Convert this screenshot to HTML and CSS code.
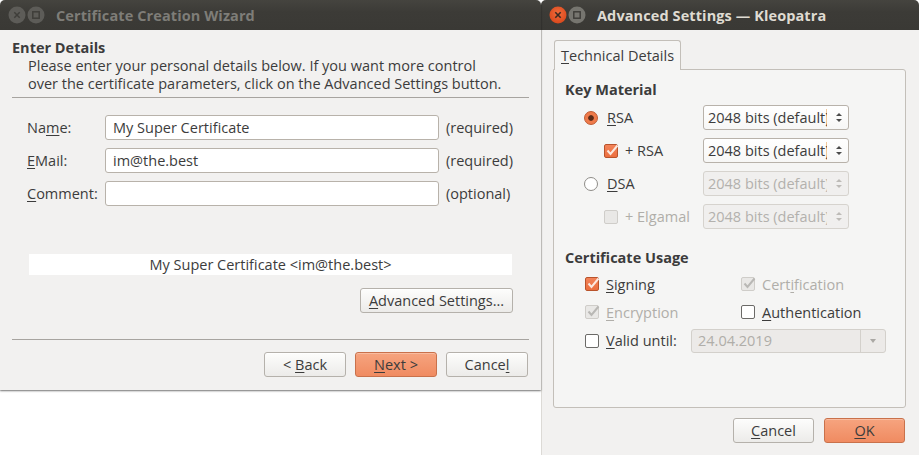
FILE: index.html
```html
<!DOCTYPE html>
<html>
<head>
<meta charset="utf-8">
<link rel="stylesheet" href="styles.css">
</head>
<body>
<div class="desk">
  <div class="win wiz">
    <div class="titlebar inactive">
      <span class="wbtn"><svg width="18" height="18" viewBox="0 0 18 18"><circle cx="9" cy="9" r="8.5" class="wb-fill"/><path d="M6.3 6.3 L11.7 11.7 M11.7 6.3 L6.3 11.7" class="wb-glyph"/></svg></span>
      <span class="wbtn"><svg width="18" height="18" viewBox="0 0 18 18"><circle cx="9" cy="9" r="8.5" class="wb-fill"/><rect x="5.8" y="5.8" width="6.4" height="6.4" class="wb-glyph"/></svg></span>
      <span class="title">Certificate Creation Wizard</span>
    </div>
    <div class="wiz-body">
      <div class="hdr">
        <div class="hdr-title">Enter Details</div>
        <div class="hdr-desc">Please enter your personal details below. If you want more control<br>over the certificate parameters, click on the Advanced Settings button.</div>
      </div>
      <div class="sep"></div>
      <div class="form">
        <div class="frow"><span class="flabel">Na<u>m</u>e:</span><span class="input">My Super Certificate</span><span class="hint">(required)</span></div>
        <div class="frow"><span class="flabel"><u>E</u>Mail:</span><span class="input">im@the.best</span><span class="hint">(required)</span></div>
        <div class="frow"><span class="flabel"><u>C</u>omment:</span><span class="input"></span><span class="hint">(optional)</span></div>
      </div>
      <div class="preview">My Super Certificate &lt;im@the.best&gt;</div>
      <div class="adv-row"><span class="btn adv-btn"><span><u>A</u>dvanced Settings...</span></span></div>
      <div class="sep sep2"></div>
      <div class="btnrow">
        <span class="btn wbtn-w"><span>&lt; <u>B</u>ack</span></span>
        <span class="btn primary wbtn-w"><span><u>N</u>ext &gt;</span></span>
        <span class="btn wbtn-w"><span>Cance<u>l</u></span></span>
      </div>
    </div>
  </div>

  <div class="win adv">
    <div class="titlebar active">
      <span class="wbtn"><svg width="18" height="18" viewBox="0 0 18 18"><defs><radialGradient id="cg" cx="50%" cy="40%" r="60%"><stop offset="0" stop-color="#f26d3d"/><stop offset="1" stop-color="#d9481c"/></radialGradient></defs><circle cx="9" cy="9" r="8.5" fill="url(#cg)"/><path d="M6.3 6.3 L11.7 11.7 M11.7 6.3 L6.3 11.7" stroke="#3a2a22" stroke-width="1.6" fill="none"/></svg></span>
      <span class="wbtn"><svg width="18" height="18" viewBox="0 0 18 18"><circle cx="9" cy="9" r="8.5" fill="#76756f"/><rect x="5.8" y="5.8" width="6.4" height="6.4" stroke="#3c3b37" stroke-width="1.4" fill="none"/></svg></span>
      <span class="title">Advanced Settings — Kleopatra</span>
    </div>
    <div class="adv-body">
      <div class="tabbar"><span class="tab"><u>T</u>echnical Details</span></div>
      <div class="pane">
        <div class="group-title">Key Material</div>
        <div class="keygrid">
          <div class="krow">
            <span class="kopt"><span class="radio on"></span><span class="olabel"><u>R</u>SA</span></span>
            <span class="combo"><span class="ctext">2048 bits (default)</span><span class="spin"><i class="up"></i><i class="dn"></i></span></span>
          </div>
          <div class="krow">
            <span class="kopt sub"><span class="check on"><svg width="16" height="16" viewBox="0 0 16 16"><path d="M3.5 7.5 L6.5 11 L13.5 2.5" stroke="#fbe9e0" stroke-width="2" fill="none"/></svg></span><span class="olabel">+ RSA</span></span>
            <span class="combo"><span class="ctext">2048 bits (default)</span><span class="spin"><i class="up"></i><i class="dn"></i></span></span>
          </div>
          <div class="krow">
            <span class="kopt"><span class="radio"></span><span class="olabel"><u>D</u>SA</span></span>
            <span class="combo dis"><span class="ctext">2048 bits (default)</span><span class="spin"><i class="up"></i><i class="dn"></i></span></span>
          </div>
          <div class="krow">
            <span class="kopt sub dis"><span class="check dis"></span><span class="olabel">+ El<u>g</u>amal</span></span>
            <span class="combo dis"><span class="ctext">2048 bits (default)</span><span class="spin"><i class="up"></i><i class="dn"></i></span></span>
          </div>
        </div>
        <div class="group-title g2">Certificate Usage</div>
        <div class="usage">
          <span class="uopt"><span class="check on"><svg width="16" height="16" viewBox="0 0 16 16"><path d="M3.5 7.5 L6.5 11 L13.5 2.5" stroke="#fbe9e0" stroke-width="2" fill="none"/></svg></span><span class="olabel"><u>S</u>igning</span></span>
          <span class="uopt dis"><span class="check dis"><svg width="16" height="16" viewBox="0 0 16 16"><path d="M3.5 7.5 L6.5 11 L13.5 2.5" stroke="#b9b8b5" stroke-width="2" fill="none"/></svg></span><span class="olabel">Cert<u>i</u>fication</span></span>
          <span class="uopt dis"><span class="check dis"><svg width="16" height="16" viewBox="0 0 16 16"><path d="M3.5 7.5 L6.5 11 L13.5 2.5" stroke="#b9b8b5" stroke-width="2" fill="none"/></svg></span><span class="olabel"><u>E</u>ncryption</span></span>
          <span class="uopt"><span class="check"></span><span class="olabel"><u>A</u>uthentication</span></span>
        </div>
        <div class="valid">
          <span class="uopt"><span class="check"></span><span class="olabel"><u>V</u>alid until:</span></span>
          <span class="datebox"><span class="dtext">24.04.2019</span><span class="ddrop"><i class="dn"></i></span></span>
        </div>
      </div>
      <div class="adv-btns">
        <span class="btn abtn"><span><u>C</u>ancel</span></span>
        <span class="btn primary abtn"><span><u>O</u>K</span></span>
      </div>
    </div>
  </div>
</div>
</body>
</html>
```
FILE: styles.css
```css
html, body { margin: 0; padding: 0; background: #ffffff; }
body { width: 919px; height: 455px; overflow: hidden; font-family: "Open Sans", "Noto Sans", sans-serif; font-size: 14.5px; color: #3c3c3c; }
u { text-decoration: underline; text-underline-offset: 2px; text-decoration-thickness: 1px; }

.desk { display: flex; align-items: flex-start; }
.win { background: #f2f1f0; border-radius: 5px 5px 0 0; display: flex; flex-direction: column; }
.wiz { width: 541px; height: 390px; box-shadow: 0 1px 2px rgba(0,0,0,0.55); position: relative; z-index: 1; }
.adv { width: 378px; height: 470px; box-shadow: inset 1px 0 0 #dcdad6; }

.titlebar { height: 30px; flex: none; display: flex; align-items: center; background: linear-gradient(#45443f, #3c3b37 40%, #3a3935); border-radius: 5px 5px 0 0; padding-left: 8px; }
.wbtn { width: 18px; height: 18px; margin-right: 1px; display: flex; }
.inactive .wb-fill { fill: #5d5c58; }
.inactive .wb-glyph { stroke: #3f3e3a; stroke-width: 1.5; fill: none; }
.title { margin-left: 10px; font-weight: bold; font-size: 14.5px; letter-spacing: 0.1px; }
.inactive .title { color: #7e7d78; }
.active .title { color: #dfdbd2; }

/* wizard */
.wiz-body { display: flex; flex-direction: column; }
.hdr { padding: 9px 12px 0 12px; line-height: 18px; }
.hdr-title { font-weight: bold; }
.hdr-desc { padding-left: 16px; }
.sep { height: 1px; background: #a7a4a0; margin: 4px 12px 0 12px; }
.form { display: flex; flex-direction: column; gap: 8px; margin-top: 17px; padding-left: 27px; }
.frow { display: flex; align-items: center; height: 25px; }
.flabel { width: 78px; }
.input { width: 334px; height: 25px; box-sizing: border-box; background: #fff; border: 1px solid #b8b2aa; border-radius: 3px; padding: 0 7px; line-height: 23px; }
.hint { margin-left: 7px; }
.preview { margin: 48px 0 0 29px; width: 483px; height: 21px; background: #fff; text-align: center; line-height: 21px; }
.adv-row { display: flex; justify-content: flex-end; margin-top: 13px; padding-right: 28px; }
.btn { box-sizing: border-box; height: 25px; display: inline-flex; align-items: center; justify-content: center; border: 1px solid #b5b1ab; border-radius: 3px; background: linear-gradient(#fdfdfc, #ecebe9); box-shadow: inset 0 1px 0 #fff; white-space: pre; }
.adv-btn { width: 153px; }
.sep2 { margin-top: 26px; }
.btnrow { display: flex; justify-content: flex-end; gap: 9px; margin-top: 12px; padding-right: 13px; }
.wbtn-w { width: 82px; }
.primary { background: linear-gradient(#f6a47f, #f08b61); border-color: #c9714b; box-shadow: inset 0 1px 0 #f9bca0; }

/* advanced */
.adv-body { display: flex; flex-direction: column; padding: 10px 13px 0 12px; }
.tabbar { display: flex; padding-left: 1px; height: 30px; margin-bottom: -1px; position: relative; z-index: 1; }
.tab { width: 127px; box-sizing: border-box; border: 1px solid #c3bfb9; border-bottom: none; border-radius: 3px 3px 0 0; background: #f5f5f4; padding-left: 6px; line-height: 29px; white-space: nowrap; }
.pane { height: 339px; box-sizing: border-box; border: 1px solid #c3bfb9; border-radius: 0 3px 3px 3px; background: #f5f5f4; padding: 11px 11px 0 11px; }
.group-title { font-weight: bold; line-height: 18px; }
.keygrid { display: flex; flex-direction: column; gap: 8px; margin-top: 6px; }
.krow { display: flex; align-items: center; height: 25px; }
.kopt { width: 138px; display: flex; align-items: center; padding-left: 19px; box-sizing: border-box; white-space: nowrap; }
.kopt.sub { padding-left: 39px; }
.kopt .olabel { margin-left: 9px; }
.kopt.sub .olabel { margin-left: 7px; }
.dis .olabel, .dis.olabel { color: #b0aea9; }
.combo { width: 146px; height: 25px; box-sizing: border-box; border: 1px solid #b8b2aa; border-radius: 3px; background: linear-gradient(#ffffff, #f7f7f6); display: flex; align-items: center; padding-left: 4px; }
.ctext { width: 119px; margin-right: 3px; overflow: hidden; white-space: nowrap; box-shadow: inset -1px 0 0 #f2c99a; height: 18px; line-height: 18px; }
.combo.dis { background: #f0efee; border-color: #d6d3ce; color: #b3b1ad; }
.combo.dis .ctext { box-shadow: none; }
.spin { flex: 1; display: flex; flex-direction: column; align-items: center; gap: 3px; }
.spin i, .ddrop i { display: block; width: 0; height: 0; border-left: 3px solid transparent; border-right: 3px solid transparent; }
.spin .up { border-bottom: 3px solid #4b4b4b; }
.spin .dn, .ddrop .dn { border-top: 3px solid #4b4b4b; }
.combo.dis .spin .up { border-bottom-color: #bdbbb7; }
.combo.dis .spin .dn { border-top-color: #bdbbb7; }

.radio { width: 14px; height: 14px; box-sizing: border-box; border-radius: 50%; border: 1px solid #8e8c88; background: #fff; display: inline-block; flex: none; }
.radio.on { background: radial-gradient(circle, #5b2b18 0 2.4px, #ef7a4a 3.2px); border-color: #bf5a31; }
.check { width: 14px; height: 14px; box-sizing: border-box; border-radius: 2px; border: 1px solid #6b6a67; background: #fff; display: inline-flex; flex: none; overflow: visible; }
.check svg { margin: -2px 0 0 -1px; flex: none; }
.check.on { background: linear-gradient(#f28359, #ec6f3f); border-color: #b9532b; }
.check.dis { background: #e9e8e6; border-color: #cfcdc9; }

.g2 { margin-top: 20px; }
.usage { display: grid; grid-template-columns: 156px auto; row-gap: 4px; margin-top: 5px; padding-left: 20px; }
.uopt { display: flex; align-items: center; height: 24px; white-space: nowrap; }
.uopt .olabel { margin-left: 7px; }
.uopt.dis .olabel { color: #b0aea9; }
.valid { display: flex; align-items: center; margin-top: 4px; padding-left: 20px; height: 25px; }
.valid .uopt { width: 106px; }
.datebox { width: 195px; height: 24px; box-sizing: border-box; border: 1px solid #d3d0cb; border-radius: 3px; background: #eceae8; color: #b0aea9; display: flex; align-items: center; }
.dtext { flex: 1; padding-left: 6px; }
.ddrop { width: 24px; height: 22px; border-left: 1px solid #d3d0cb; display: flex; align-items: center; justify-content: center; }
.ddrop .dn { border-top-color: #aaa8a4; border-left-width: 3.5px; border-right-width: 3.5px; border-top-width: 4px; }

.adv-btns { display: flex; justify-content: flex-end; gap: 10px; margin-top: 10px; padding-right: 1px; }
.abtn { width: 81px; }
```
